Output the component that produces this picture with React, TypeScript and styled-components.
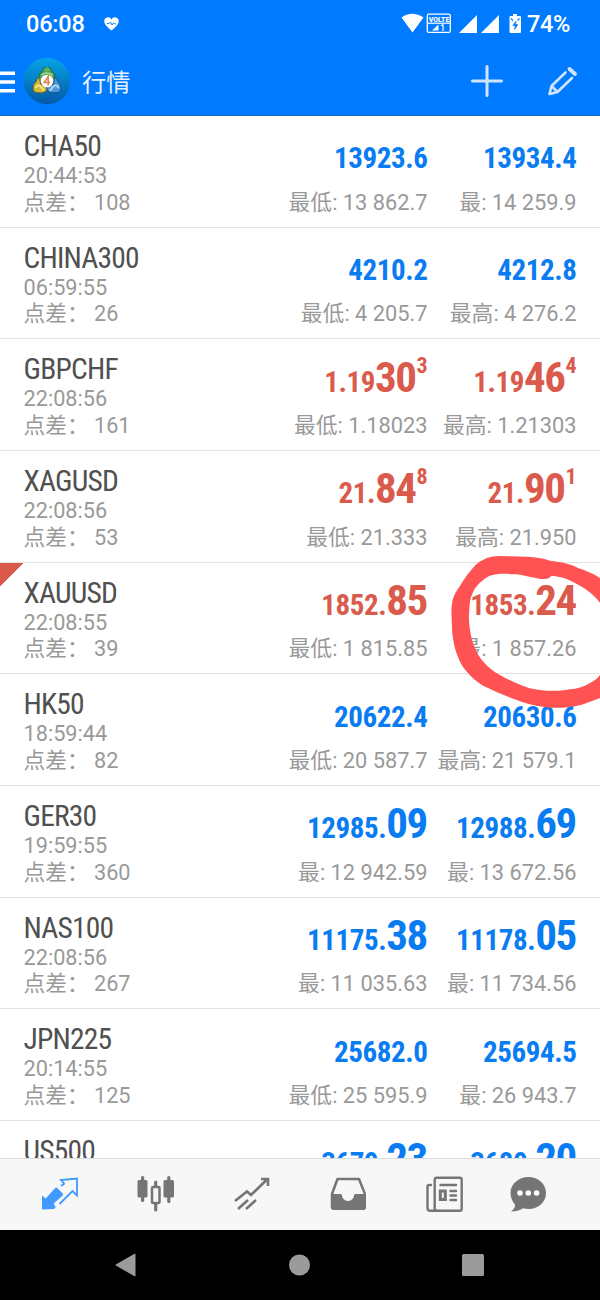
import React from "react";
import styled, { createGlobalStyle } from "styled-components";

const BLUE = "#007aff";
const QUOTE_BLUE = "#0a7cf2";
const QUOTE_RED = "#da5a4b";
const ICON_GRAY = "#757575";

const GlobalStyle = createGlobalStyle`
  * { box-sizing: border-box; }
  body { margin: 0; background: #fff; }
`;

const Screen = styled.div`
  position: relative;
  display: flex;
  flex-direction: column;
  width: 600px;
  height: 1300px;
  overflow: hidden;
  background: #fff;
  font-family: Roboto, "Noto Sans CJK SC", sans-serif;
`;

const Header = styled.header`
  flex: none;
  height: 116px;
  background: ${BLUE};
  border-bottom: 1px solid #1565c0;
  color: #fff;
`;

const StatusBar = styled.div`
  display: flex;
  align-items: center;
  height: 46px;
  padding: 2px 30px 0 26px;
`;

const Clock = styled.span`
  width: 78px;
  font-size: 23.5px;
  font-weight: 500;
  letter-spacing: -0.2px;
`;

const StatusIcons = styled.div`
  display: flex;
  align-items: center;
  margin-left: auto;
`;

const Battery = styled.span`
  margin-left: 4px;
  font-size: 23.5px;
  font-weight: 500;
  letter-spacing: -0.3px;
`;

const TitleBar = styled.div`
  display: flex;
  align-items: center;
  height: 70px;
`;

const MenuIcon = styled.svg`
  flex: none;
  margin-right: 8px;
`;

const Title = styled.h1`
  flex: 1;
  margin: 0;
  padding: 4px 0 0 11px;
  font-size: 24.2px;
  font-weight: 400;
  line-height: 36px;
  color: #e6f2ff;
`;

const EditIcon = styled.svg`
  margin: 0 22px 0 43px;
`;

const List = styled.main`
  flex: 1;
  min-height: 0;
  overflow: hidden;
`;

const Row = styled.section<{ $flag?: boolean }>`
  display: grid;
  grid-template-columns: 1fr 170px 149px;
  height: 111.66px;
  padding: 0 23.5px 0 23.5px;
  border-bottom: 1px solid #e2e2e2;
  background: ${(p) =>
    p.$flag ? `linear-gradient(135deg, ${QUOTE_RED} 0 16.3px, transparent 16.9px)` : "none"};
`;

const Info = styled.div`
  padding-top: 14px;
  line-height: 26.7px;
  font-size: 21.7px;
  color: #999;
  white-space: pre;
`;

const SymbolName = styled.div`
  font-family: "Roboto Condensed", Roboto, sans-serif;
  font-stretch: 75%;
  font-size: 29.5px;
  line-height: 33px;
  letter-spacing: -0.8px;
  color: #505050;
`;

const Quote = styled.div`
  padding-top: 15.3px;
  text-align: right;
  white-space: nowrap;
`;

const Price = styled.div<{ $down?: boolean }>`
  height: 44px;
  font-family: "Roboto Condensed", Roboto, sans-serif;
  font-stretch: 75%;
  font-weight: 700;
  font-size: 43px;
  line-height: 44px;
  color: ${(p) => (p.$down ? QUOTE_RED : QUOTE_BLUE)};
`;

const Small = styled.span`
  font-size: 29px;
  line-height: 0;
  letter-spacing: -0.4px;
`;

const Big = styled.span`
  margin-right: 0.8px;
  line-height: 0;
  letter-spacing: -1.5px;
`;

const Pip = styled.span`
  font-size: 22px;
  line-height: 0;
  vertical-align: 19.5px;
`;

const Range = styled.div`
  margin-top: 13.5px;
  font-size: 21.8px;
  line-height: 27px;
  color: #999;
`;

const TabBar = styled.nav`
  flex: none;
  display: flex;
  align-items: center;
  height: 72px;
  padding-bottom: 2px;
  border-top: 1px solid #dcdcdc;
  background: #f7f7f7;
`;

const Tab = styled.div<{ $w: number }>`
  display: flex;
  justify-content: center;
  width: ${(p) => p.$w}px;
`;

const NavBar = styled.footer`
  flex: none;
  display: flex;
  align-items: center;
  justify-content: space-between;
  height: 70px;
  padding: 0 116px 0 115px;
  background: #000;
`;

const Annotation = styled.svg`
  position: absolute;
  left: 440px;
  top: 545px;
`;

type P = [string, string?, string?];
type Item = {
  name: string;
  time: string;
  spread: string;
  bid: P;
  ask: P;
  low: string;
  high: string;
  down?: boolean;
  flag?: boolean;
};

const items: Item[] = [
  { name: "CHA50", time: "20:44:53", spread: "108", bid: ["13923.6"], ask: ["13934.4"], low: "最低: 13 862.7", high: "最: 14 259.9" },
  { name: "CHINA300", time: "06:59:55", spread: "26", bid: ["4210.2"], ask: ["4212.8"], low: "最低: 4 205.7", high: "最高: 4 276.2" },
  { name: "GBPCHF", time: "22:08:56", spread: "161", bid: ["1.19", "30", "3"], ask: ["1.19", "46", "4"], low: "最低: 1.18023", high: "最高: 1.21303", down: true },
  { name: "XAGUSD", time: "22:08:56", spread: "53", bid: ["21.", "84", "8"], ask: ["21.", "90", "1"], low: "最低: 21.333", high: "最高: 21.950", down: true },
  { name: "XAUUSD", time: "22:08:55", spread: "39", bid: ["1852.", "85"], ask: ["1853.", "24"], low: "最低: 1 815.85", high: "最: 1 857.26", down: true, flag: true },
  { name: "HK50", time: "18:59:44", spread: "82", bid: ["20622.4"], ask: ["20630.6"], low: "最低: 20 587.7", high: "最高: 21 579.1" },
  { name: "GER30", time: "19:59:55", spread: "360", bid: ["12985.", "09"], ask: ["12988.", "69"], low: "最: 12 942.59", high: "最: 13 672.56" },
  { name: "NAS100", time: "22:08:56", spread: "267", bid: ["11175.", "38"], ask: ["11178.", "05"], low: "最: 11 035.63", high: "最: 11 734.56" },
  { name: "JPN225", time: "20:14:55", spread: "125", bid: ["25682.0"], ask: ["25694.5"], low: "最低: 25 595.9", high: "最: 26 943.7" },
  { name: "US500", time: "", spread: "", bid: ["3679.", "23"], ask: ["3680.", "20"], low: "", high: "" },
];

function QuoteCell({ price, range, down }: { price: P; range: string; down?: boolean }) {
  return (
    <Quote>
      <Price $down={down}>
        <Small>{price[0]}</Small>
        {price[1] && <Big>{price[1]}</Big>}
        {price[2] && <Pip>{price[2]}</Pip>}
      </Price>
      <Range>{range}</Range>
    </Quote>
  );
}

function Logo() {
  return (
    <svg width="48" height="48" viewBox="0 0 48 48">
      <defs>
        <linearGradient id="sky" x1="0" y1="0" x2="0" y2="1">
          <stop offset="0" stopColor="#05a4e6" />
          <stop offset="1" stopColor="#0558a6" />
        </linearGradient>
      </defs>
      <circle cx="24" cy="24" r="23.3" fill="url(#sky)" />
      <path d="M17 26q-3-8 2.500-12 0-3.500 4.500-3.500t4.500 3.500q5.500 4 2.500 12l-7-4z" fill="#4aa552" stroke="#1c6a45" strokeWidth="1" />
      <path d="M16.500 20.500q-3 .5-3.500 4.500-3 2-3 6 0 4 3 4.500 6 1.500 10.500-1.500l1-4-7-3z" fill="#d3b93a" stroke="#6a6420" strokeWidth="1" />
      <path d="M31.500 20.500q3 .5 3.500 4.500 3 2 3 6 0 4-3 4.500-6 1.500-10.500-1.500l-1-4 7-3z" fill="#4d97d6" stroke="#15538f" strokeWidth="1" />
      <path d="M12.500 31q2-4 4.500-2t4 5" fill="none" stroke="#f4e58a" strokeWidth="1.800" />
      <path d="M35.500 31q-2-4-4.500-2t-4 5" fill="none" stroke="#b5daf5" strokeWidth="1.800" />
      <path d="M18.500 18q5-4 11 0" fill="none" stroke="#a5dc9a" strokeWidth="1.600" />
      <circle cx="24" cy="12.500" r="2.300" fill="#5fb562" />
      <circle cx="24" cy="24" r="6.300" fill="#fff" />
      <path d="M25.200 28.500v-9l-4 6h6" fill="none" stroke="#e5834f" strokeWidth="1.600" />
    </svg>
  );
}

export default function App() {
  return (
    <Screen>
      <GlobalStyle />
      <Header>
        <StatusBar>
          <Clock>06:08</Clock>
          <svg width="15" height="14" viewBox="0 0 15 14">
            <path d="M7.500 13.500C3 9.800.3 7.500.3 4.300A3.800 3.800 0 0 1 7.500 2.400 3.800 3.800 0 0 1 14.700 4.300C14.700 7.500 12 9.800 7.500 13.500z" fill="#fff" />
            <path d="M3 6.500h2l1.500-1.500 1.500 3 1.500-2 1 .8h1.500" fill="none" stroke={BLUE} strokeWidth="1" />
          </svg>
          <StatusIcons>
            <svg width="122" height="24" viewBox="401 11 122 24">
              <path d="M401.500 16.500q10.500-7.500 22 0l-11 15z" fill="#fff" />
              <rect x="427.300" y="13.200" width="23" height="18.200" rx="1.500" fill="none" stroke="#fff" strokeWidth="1.300" />
              <path d="M427 22.200h24" stroke="#fff" strokeWidth="1.200" />
              <text x="439" y="20.500" fontSize="7.800" fontWeight="900" fill="#fff" textAnchor="middle" textLength="20.500" lengthAdjust="spacingAndGlyphs" fontFamily="Roboto">VOLTE</text>
              <path d="M432 29.500h6.500v-6z" fill="#fff" />
              <text x="440" y="30" fontSize="9" fontWeight="500" fill="#fff" fontFamily="Roboto">1</text>
              <path d="M459 32h18V14zM481 32h18V14z" fill="#fff" />
              <path d="M513 13h4v2h3q1 0 1 1v15q0 1-1 1h-9.500q-1 0-1-1V16q0-1 1-1h2.500z" fill="#fff" />
              <path d="M516.200 20l-3.500 4.500h2.400l-.6 4 3.500-5h-2.400z" fill={BLUE} stroke={BLUE} strokeWidth=".5" />
              <path d="M511 17.500l2 2M519.500 17.500l-2 2" stroke={BLUE} strokeWidth="1.200" />
            </svg>
            <Battery>74%</Battery>
          </StatusIcons>
        </StatusBar>
        <TitleBar>
          <MenuIcon width="15" height="24" viewBox="0 0 15 24">
            <path d="M0 4.200h15M0 13h15M0 21.800h15" stroke="#fff" strokeWidth="3.400" />
          </MenuIcon>
          <Logo />
          <Title>行情</Title>
          <svg width="32" height="32" viewBox="0 0 32 32" stroke="#cfe5ff" strokeWidth="3" strokeLinecap="round">
            <path d="M16 1.500v29M1.500 16h29" />
          </svg>
          <EditIcon width="32" height="32" viewBox="546 65 32 32" fill="none" stroke="#cfe5ff" strokeWidth="2.600" strokeLinejoin="round" strokeLinecap="round">
            <path d="M565.500 72.500l-14 13.500-2 8 8-2 14.500-14M551.500 86l6 6" />
            <path d="M569.500 69l5.500 5" strokeWidth="3.800" />
          </EditIcon>
        </TitleBar>
      </Header>
      <List>
        {items.map((it) => (
          <Row key={it.name} $flag={it.flag}>
            <Info>
              <SymbolName>{it.name}</SymbolName>
              <div>{it.time}</div>
              {it.spread && <div>{`点差： ${it.spread}`}</div>}
            </Info>
            <QuoteCell price={it.bid} range={it.low} down={it.down} />
            <QuoteCell price={it.ask} range={it.high} down={it.down} />
          </Row>
        ))}
      </List>
      <TabBar>
        <Tab $w={120}>
          <svg width="38" height="34" viewBox="41 1177 38 34">
            <path d="M42 1195.500l3.700 3 9.500-10.500 1.500-.5 6.500 6.500-.5 1.500-9 8 2 4-2 1.500-11.700.5z" fill="#409aff" />
            <path d="M64.500 1184l-3.500-4 16-1.500v17l-4.500-4.500-13 13M61 1186l3.500-2.500" fill="none" stroke="#409aff" strokeWidth="1.800" />
          </svg>
        </Tab>
        <Tab $w={71}>
          <svg width="38" height="38" viewBox="137 1175 38 38" fill={ICON_GRAY}>
            <rect x="137.500" y="1180" width="10" height="17.500" rx="1.500" />
            <rect x="141" y="1176" width="3.200" height="26" rx="1.500" />
            <rect x="163.500" y="1180" width="10.500" height="17.500" rx="1.500" />
            <rect x="167.200" y="1176" width="3.200" height="27" rx="1.500" />
            <rect x="152" y="1187" width="7.500" height="16" fill="none" stroke={ICON_GRAY} strokeWidth="2.500" rx="1" />
            <path d="M155.700 1182v4M155.700 1204v6" stroke={ICON_GRAY} strokeWidth="3.200" strokeLinecap="round" />
          </svg>
        </Tab>
        <Tab $w={121}>
          <svg width="38" height="36" viewBox="233 1176 38 36" fill="none" stroke={ICON_GRAY} strokeWidth="2.600">
            <path d="M235 1201l12-9.500 4 3.500 16.500-16M261 1179h7v7M238 1209l10-9M246 1209l10-9" />
          </svg>
        </Tab>
        <Tab $w={72}>
          <svg width="36" height="34" viewBox="330 1176 36 34">
            <path d="M332 1193l5.500-15h21.500l6 15v12.500q0 2-2 2h-29q-2 0-2-2z" fill="none" stroke={ICON_GRAY} strokeWidth="2.500" strokeLinejoin="round" />
            <path d="M331 1193h10.500q1 7 6.500 7t6.500-7H366v13q0 3-3 3h-29q-3 0-3-3z" fill={ICON_GRAY} />
          </svg>
        </Tab>
        <Tab $w={122}>
          <svg width="38" height="36" viewBox="427 1175 38 36" fill="none" stroke={ICON_GRAY} strokeWidth="2.400" strokeLinecap="round">
            <rect x="435.700" y="1176.700" width="27" height="33" rx="2" />
            <path d="M432 1184h-1.500q-2 0-2 2v21q0 2.700 2.500 2.700h7M441.500 1184h15.500M451.500 1190h5.500M451.500 1194.500h5.500M451.500 1199h5.500" />
            <rect x="441.300" y="1190" width="5" height="8.500" strokeWidth="3" />
          </svg>
        </Tab>
        <Tab $w={44}>
          <svg width="36" height="36" viewBox="510 1175 36 36">
            <path d="M528.500 1176c10 0 17.500 7 17.500 16s-7.500 16-17.500 16q-3 0-5.500-.8-5 3.300-12 3.300 4.500-3.500 4-7-4.500-5-4.500-11.500c0-9 8-16 18-16z" fill={ICON_GRAY} />
            <g fill="#fff">
              <circle cx="520" cy="1192" r="2.800" />
              <circle cx="528.300" cy="1192" r="2.800" />
              <circle cx="536.600" cy="1192" r="2.800" />
            </g>
          </svg>
        </Tab>
      </TabBar>
      <NavBar>
        <svg width="21" height="24" viewBox="0 0 21 24">
          <path d="M20 1v22L.8 12z" fill="#9b9b9b" stroke="#9b9b9b" strokeLinejoin="round" />
        </svg>
        <svg width="22" height="22" viewBox="0 0 22 22">
          <circle cx="11.500" cy="11" r="10.500" fill="#9b9b9b" />
        </svg>
        <svg width="22" height="22" viewBox="0 0 22 22">
          <rect width="22" height="22" rx="1.500" fill="#9b9b9b" />
        </svg>
      </NavBar>
      <Annotation width="160" height="170" viewBox="440 545 160 170">
        <path
          fill="#ff5252"
          d="M600 578C592 573 585 570 578 568C569 563 560 562 550 560.700C540 557 530 557 520 556.500L500 556C493 556 488 557 483 560C478 562 474 566 470 571.500C466 576 463 581 459.500 586.700C455 593 453 597 452.300 602C451 608 451.500 614 451.700 620C452 627 452 634 453.300 640C454 646 456 652 458 657C460 663 464 669 468 673C472 678 477 682 483 685.700C494 691 506 696 516.700 700C525 703 534 706 543 706.700C550 708 556 708 563 707.700C571 707 579 706 586.700 703L600 698V675C597 679 594 681 590 683C583 687 577 689 570 689.300C562 691 554 691 546.700 690.700C538 690 531 689 523.300 686C515 683 507 679 500 675C494 672 488 667 483.300 661.700C479 657 477 653 475 648C472 642 471 636 470 630C469 623 468.500 617 469.300 610C469.500 604 470 598 472.700 593C475 587 479 583 483.300 580C488 576 492 575 496.700 574.300C503 573.500 510 574 516.700 574.300C523 575 529 577 535 577.700C539 579 542 579 545 579C548 579 550 577.500 551.700 575.700C557 576.500 562 577 566.700 579C574 582 581 586 586.700 590C592 594 597 598 600 603z"
        />
      </Annotation>
    </Screen>
  );
}
